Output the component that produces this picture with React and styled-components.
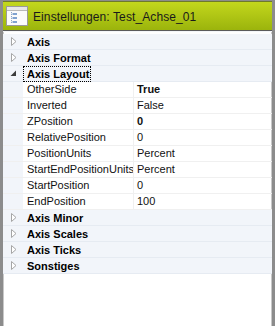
import React from 'react';
import styled, { createGlobalStyle } from 'styled-components';

const GlobalStyle = createGlobalStyle`
  body {
    margin: 0;
    font-family: "Liberation Sans", Arial, sans-serif;
    background: #ffffff;
  }
`;

// property grid content
const sections = [
  { title: 'Axis' },
  { title: 'Axis Format' },
  {
    title: 'Axis Layout',
    open: true,
    items: [
      { name: 'OtherSide', value: 'True', bold: true },
      { name: 'Inverted', value: 'False' },
      { name: 'ZPosition', value: '0', bold: true },
      { name: 'RelativePosition', value: '0' },
      { name: 'PositionUnits', value: 'Percent' },
      { name: 'StartEndPositionUnits', value: 'Percent' },
      { name: 'StartPosition', value: '0' },
      { name: 'EndPosition', value: '100' },
    ],
  },
  { title: 'Axis Minor' },
  { title: 'Axis Scales' },
  { title: 'Axis Ticks' },
  { title: 'Sonstiges' },
];

const WindowIcon = () => (
  <svg width="22" height="20" viewBox="0 0 22 20">
    <rect x="0.5" y="0.5" width="21" height="19" fill="#fbfbfb" stroke="#9a9a9a" />
    <rect x="1" y="1" width="20" height="3" fill="#e6e6e6" />
    <line x1="1" y1="4.5" x2="21" y2="4.5" stroke="#b8b8b8" />
    <line x1="5.5" y1="6" x2="5.5" y2="17" stroke="#8aa6c8" strokeDasharray="1 1" />
    <rect x="7" y="7" width="4" height="2" fill="#7fa2d0" />
    <rect x="7" y="11" width="4" height="2" fill="#7fa2d0" />
    <rect x="7" y="15" width="4" height="2" fill="#7fa2d0" />
    <line x1="5.5" y1="8" x2="7" y2="8" stroke="#8aa6c8" />
    <line x1="5.5" y1="12" x2="7" y2="12" stroke="#8aa6c8" />
    <line x1="5.5" y1="16" x2="7" y2="16" stroke="#8aa6c8" />
  </svg>
);

const Expander = ({ open }) =>
  open ? (
    <svg width="7" height="7" viewBox="0 0 7 7">
      <polygon points="6,0.5 6,6 0.5,6" fill="#3c3c3c" />
    </svg>
  ) : (
    <svg width="6" height="9" viewBox="0 0 6 9">
      <polygon points="0.5,0.5 5,4.5 0.5,8.5" fill="#ffffff" stroke="#a6a6a6" />
    </svg>
  );

const App = () => {
  return (
    <>
      <GlobalStyle />
      <Frame>
        <Header>
          <WindowIcon />
          <HeaderTitle>Einstellungen: Test_Achse_01</HeaderTitle>
        </Header>

        <Grid>
          {sections.map((s) => (
            <React.Fragment key={s.title}>
              <CategoryRow>
                <Gutter>
                  <Expander open={s.open} />
                </Gutter>
                <CategoryTitle $focused={s.open}>{s.title}</CategoryTitle>
              </CategoryRow>

              {s.open &&
                s.items.map((it) => (
                  <PropRow key={it.name}>
                    <Gutter />
                    <NameCell>{it.name}</NameCell>
                    <ValueCell $bold={it.bold}>{it.value}</ValueCell>
                  </PropRow>
                ))}
            </React.Fragment>
          ))}
        </Grid>
      </Frame>
    </>
  );
};

// -------------------------------------------------------------------------
// Styled Components:

const Frame = styled.div`
  width: 275px;
  height: 326px;
  box-sizing: border-box;
  display: flex;
  flex-direction: column;
  border-top: 1px solid #8c8c8c;
  border-left: 3px solid #8c8c8c;
  border-right: 3px solid #8c8c8c;
  box-shadow: inset 1px 0 0 #c8c8c8, inset -1px 0 0 #c8c8c8;
  background: #ffffff;
  overflow: hidden;
`;

const Header = styled.div`
  height: 30px;
  flex: none;
  box-sizing: border-box;
  display: flex;
  align-items: center;
  gap: 5px;
  padding: 0 0 0 3px;
  border-top: 1px solid #6f7a2a;
  border-bottom: 1px solid #5b5b5b;
  background: linear-gradient(#c3d71d, #9bb40c);
`;

const HeaderTitle = styled.span`
  font-size: 12px;
  letter-spacing: 0.1px;
  color: #1a1a1a;
  padding-top: 1px;
`;

const Grid = styled.div`
  display: flex;
  flex-direction: column;
  padding-top: 2px;
  border-top: 1px solid #f4f6f9;
`;

const CategoryRow = styled.div`
  height: 16px;
  box-sizing: border-box;
  display: flex;
  align-items: center;
  background: #f2f5fa;
  border-bottom: 1px solid #e6ebf2;
`;

const Gutter = styled.div`
  width: 20px;
  height: 100%;
  flex: none;
  display: flex;
  align-items: center;
  justify-content: center;
  padding-left: 1px;
  box-sizing: border-box;
  background: #f2f5fa;
`;

const CategoryTitle = styled.div`
  font-size: 11px;
  font-weight: bold;
  color: #000000;
  padding: 0 1px 0 3px;
  margin-left: 1px;
  line-height: 14px;
  outline: ${(p) => (p.$focused ? '1px dotted #000' : 'none')};
`;

const PropRow = styled.div`
  height: 16px;
  box-sizing: border-box;
  display: flex;
  border-bottom: 1px solid #f0f0f0;
  font-size: 11px;
  line-height: 15px;
  color: #111111;
`;

const NameCell = styled.div`
  width: 111px;
  flex: none;
  box-sizing: border-box;
  padding-left: 4px;
  white-space: nowrap;
  overflow: hidden;
  border-right: 1px solid #f0f0f0;
`;

const ValueCell = styled.div`
  padding-left: 3px;
  white-space: nowrap;
  font-weight: ${(p) => (p.$bold ? 'bold' : 'normal')};
`;

export default App;
